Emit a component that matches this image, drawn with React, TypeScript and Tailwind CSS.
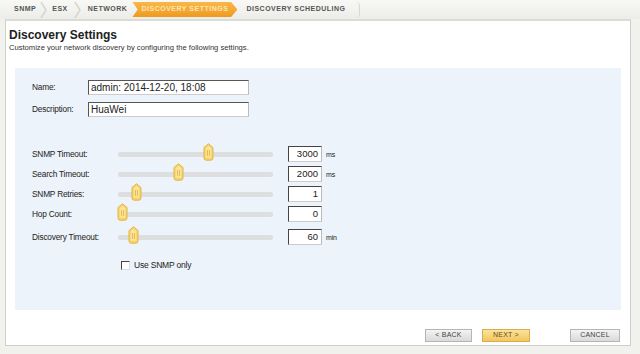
import React from "react";

const font = { fontFamily: '"Liberation Sans", Arial, sans-serif' };

function Chev() {
  return (
    <svg width="8" height="18" viewBox="0 0 8 18" className="shrink-0">
      <path d="M1 1 L6 9 L1 17" fill="none" stroke="#d6d6d0" strokeWidth="1.5" />
    </svg>
  );
}

function Thumb() {
  return (
    <svg width="11" height="18" viewBox="0 0 11 18">
      <path d="M5.5 0.8 L10 4.5 L10 15 Q10 17.2 7.8 17.2 L3.2 17.2 Q1 17.2 1 15 L1 4.5 Z" fill="#f7d46a" stroke="#e2b446" strokeWidth="1" />
      <path d="M5.5 3 L8.3 5.3 L8.3 14.8 L2.7 14.8 L2.7 5.3 Z" fill="#fbe59a" />
      <line x1="4.5" y1="7" x2="4.5" y2="13" stroke="#e0b040" strokeWidth="0.8" />
      <line x1="6.5" y1="7" x2="6.5" y2="13" stroke="#e0b040" strokeWidth="0.8" />
    </svg>
  );
}

const sliders = [
  { label: "SNMP Timeout:", pos: 90, value: "3000", unit: "ms" },
  { label: "Search Timeout:", pos: 60, value: "2000", unit: "ms" },
  { label: "SNMP Retries:", pos: 18, value: "1", unit: "" },
  { label: "Hop Count:", pos: 4, value: "0", unit: "" },
  { label: "Discovery Timeout:", pos: 15, value: "60", unit: "min" },
];

export default function App() {
  return (
    <div className="w-[640px] h-[354px] bg-[#f1f1ed] overflow-hidden flex flex-col text-[#222]" style={font}>
      {/* Tab bar */}
      <div className="h-[19px] flex items-center pl-[14px] bg-gradient-to-b from-[#f8f8f6] to-[#ececE8]">
        <div className="flex items-center h-[18px] text-[7px] font-bold tracking-[0.5px] text-[#555]">
          <span>SNMP</span>
          <span className="mx-[4px]"><Chev /></span>
          <span>ESX</span>
          <span className="mx-[6px]"><Chev /></span>
          <span>NETWORK</span>
          <div className="ml-[5px] h-[15px] w-[105px] bg-gradient-to-b from-[#f9b84a] to-[#ee9a1c] flex items-center justify-center text-[#fde6b0] [clip-path:polygon(0_0,94%_0,100%_50%,94%_100%,0_100%,5%_50%)]">
            DISCOVERY SETTINGS
          </div>
          <span className="ml-[9px] pr-[10px]">DISCOVERY SCHEDULING</span>
          <div className="w-[4px] h-[16px] rounded-r-full border-r border-[#d8d8d2]" />
        </div>
      </div>

      {/* Main panel */}
      <div className="ml-[5px] mr-[9px] h-[327px] bg-white border border-[#cfcfca] border-t-[2px] border-t-[#dcdcd6] flex flex-col">
        <div className="pl-[3px] pt-[7px]">
          <div className="text-[12px] font-bold text-[#222] leading-[14px]">Discovery Settings</div>
          <div className="text-[7.6px] text-[#333] leading-[10px] mt-[1px]">
            Customize your network discovery by configuring the following settings.
          </div>
        </div>

        <div className="ml-[9px] mr-[9px] mt-[15px] h-[242px] bg-[#edf3fa] pl-[17px] pt-[12px] text-[8.3px] tracking-[-0.2px]">
          {/* Name / Description */}
          <div className="flex items-center h-[15px]">
            <div className="w-[56px]">Name:</div>
            <div className="w-[161px] h-[15px] bg-white border border-t-[#555] border-l-[#555] border-r-[#bbb] border-b-[#ccc] text-[10px] leading-[13px] pl-[2px] tracking-normal">
              admin: 2014-12-20, 18:08
            </div>
          </div>
          <div className="flex items-center h-[15px] mt-[7px]">
            <div className="w-[56px]">Description:</div>
            <div className="w-[161px] h-[15px] bg-white border border-t-[#555] border-l-[#555] border-r-[#bbb] border-b-[#ccc] text-[10px] leading-[13px] pl-[2px] tracking-normal">
              HuaWei
            </div>
          </div>

          {/* Sliders */}
          <div className="mt-[27px] flex flex-col">
            {sliders.map((s, i) => (
              <div key={s.label} className={`flex items-center h-[20px] ${i === 4 ? "mt-[3px]" : ""}`}>
                <div className="w-[86px]">{s.label}</div>
                <div className="relative w-[155px] h-[5px] bg-[#dcdedf] rounded-[2px]">
                  <div className="absolute top-[-9px]" style={{ left: `${s.pos - 5}px` }}>
                    <Thumb />
                  </div>
                </div>
                <div className="ml-[15px] w-[34px] h-[16px] bg-white border border-t-[#444] border-l-[#444] border-r-[#bbb] border-b-[#ccc] text-[9.5px] leading-[14px] text-right pr-[3px] tracking-normal">
                  {s.value}
                </div>
                <div className="ml-[4px] text-[7px] pt-[3px]">{s.unit}</div>
              </div>
            ))}
          </div>

          {/* Checkbox */}
          <div className="flex items-center mt-[12px] ml-[89px]">
            <div className="w-[9px] h-[9px] bg-white border border-t-[#444] border-l-[#444] border-r-[#ddd] border-b-[#ddd]" />
            <div className="ml-[4px] text-[8.5px]">Use SNMP only</div>
          </div>
        </div>

        {/* Buttons */}
        <div className="flex items-center mt-[19px] text-[7px] tracking-[0.2px]">
          <div className="ml-[419px] w-[47px] h-[13px] flex items-center justify-center border border-[#b5b5b5] bg-gradient-to-b from-[#f4f4f4] to-[#d9d9d9] text-[#444]">
            &lt; BACK
          </div>
          <div className="ml-[10px] w-[48px] h-[13px] flex items-center justify-center border border-[#d9ad4d] bg-gradient-to-b from-[#fbe39a] to-[#f2c65c] text-[#6a4b12]">
            NEXT &gt;
          </div>
          <div className="ml-[40px] w-[50px] h-[13px] flex items-center justify-center border border-[#b5b5b5] bg-gradient-to-b from-[#f4f4f4] to-[#d9d9d9] text-[#444]">
            CANCEL
          </div>
        </div>
      </div>
    </div>
  );
}
